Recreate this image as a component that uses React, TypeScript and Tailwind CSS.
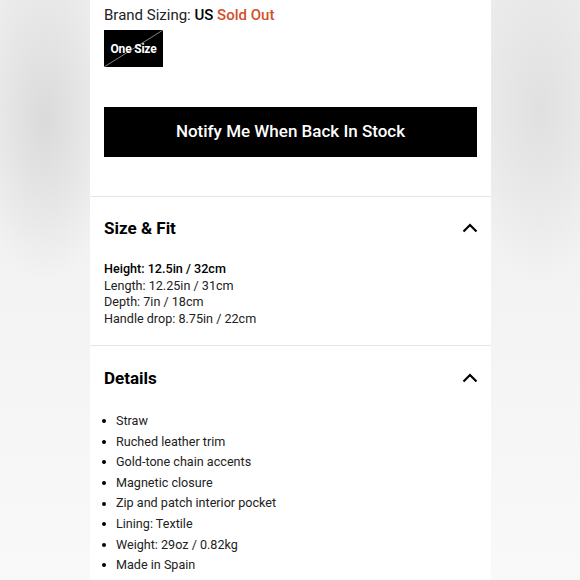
const specs = [
  { label: "Height: 12.5in / 32cm", bold: true },
  { label: "Length: 12.25in / 31cm", bold: false },
  { label: "Depth: 7in / 18cm", bold: false },
  { label: "Handle drop: 8.75in / 22cm", bold: false },
];

const details = [
  "Straw",
  "Ruched leather trim",
  "Gold-tone chain accents",
  "Magnetic closure",
  "Zip and patch interior pocket",
  "Lining: Textile",
  "Weight: 29oz / 0.82kg",
  "Made in Spain",
];

function Chevron() {
  return (
    <svg width="16" height="10" viewBox="0 0 16 10" className="mr-[-1px]">
      <path d="M1.5 8.5 L8 2 L14.5 8.5" fill="none" stroke="#000" strokeWidth="2.2" />
    </svg>
  );
}

function SectionHeader({ title }: { title: string }) {
  return (
    <div className="flex items-center justify-between px-[14px]">
      <h2 className="text-[17px] font-bold leading-[22px] text-black">{title}</h2>
      <Chevron />
    </div>
  );
}

function App() {
  return (
    <div
      className="flex h-[580px] w-[580px] overflow-hidden bg-[radial-gradient(ellipse_70px_160px_at_45px_120px,#dadada,transparent),radial-gradient(ellipse_80px_170px_at_540px_110px,#e0e0e0,transparent),linear-gradient(#ededed,#f9f9f9)]"
      style={{ fontFamily: "Roboto, 'Liberation Sans', sans-serif" }}
    >
      <div className="ml-[90px] h-full w-[401px] bg-white">
        <div className="px-[14px] pt-[5px]">
          <p className="text-[15px] leading-[20px] text-[#222]">
            Brand Sizing: <span className="font-medium text-black">US</span>{" "}
            <span className="font-medium text-[#d2502a]">Sold Out</span>
          </p>
          <div className="relative mt-[5px] flex h-[37px] w-[59px] items-center justify-center overflow-hidden bg-black">
            <svg className="absolute inset-0" width="59" height="37" viewBox="0 0 59 37">
              <line x1="0" y1="37" x2="59" y2="0" stroke="#bbb" strokeWidth="0.7" />
            </svg>
            <span className="relative text-[12px] font-bold tracking-[-0.2px] text-white">One Size</span>
          </div>
          <button className="mt-[40px] flex h-[50px] w-[373px] items-center justify-center bg-black text-[17px] font-medium text-white">
            Notify Me When Back In Stock
          </button>
        </div>

        <div className="mt-[39px] border-t border-[#e6e6e6]" />

        <div className="pt-[20px]">
          <SectionHeader title="Size & Fit" />
          <div className="mt-[22px] px-[14px] text-[12.6px] leading-[16.5px] text-[#222]">
            {specs.map((s) => (
              <p key={s.label} className={s.bold ? "font-medium text-black" : ""}>
                {s.label}
              </p>
            ))}
          </div>
        </div>

        <div className="mt-[18px] border-t border-[#e6e6e6]" />

        <div className="pt-[21px]">
          <SectionHeader title="Details" />
          <ul className="mt-[22px] px-[12px] text-[12.6px] leading-[20.6px] text-[#222]">
            {details.map((d) => (
              <li key={d} className="flex items-center">
                <span className="mr-[10px] h-[4px] w-[4px] rounded-full bg-black" />
                {d}
              </li>
            ))}
          </ul>
        </div>
      </div>
    </div>
  );
}

export default App;
